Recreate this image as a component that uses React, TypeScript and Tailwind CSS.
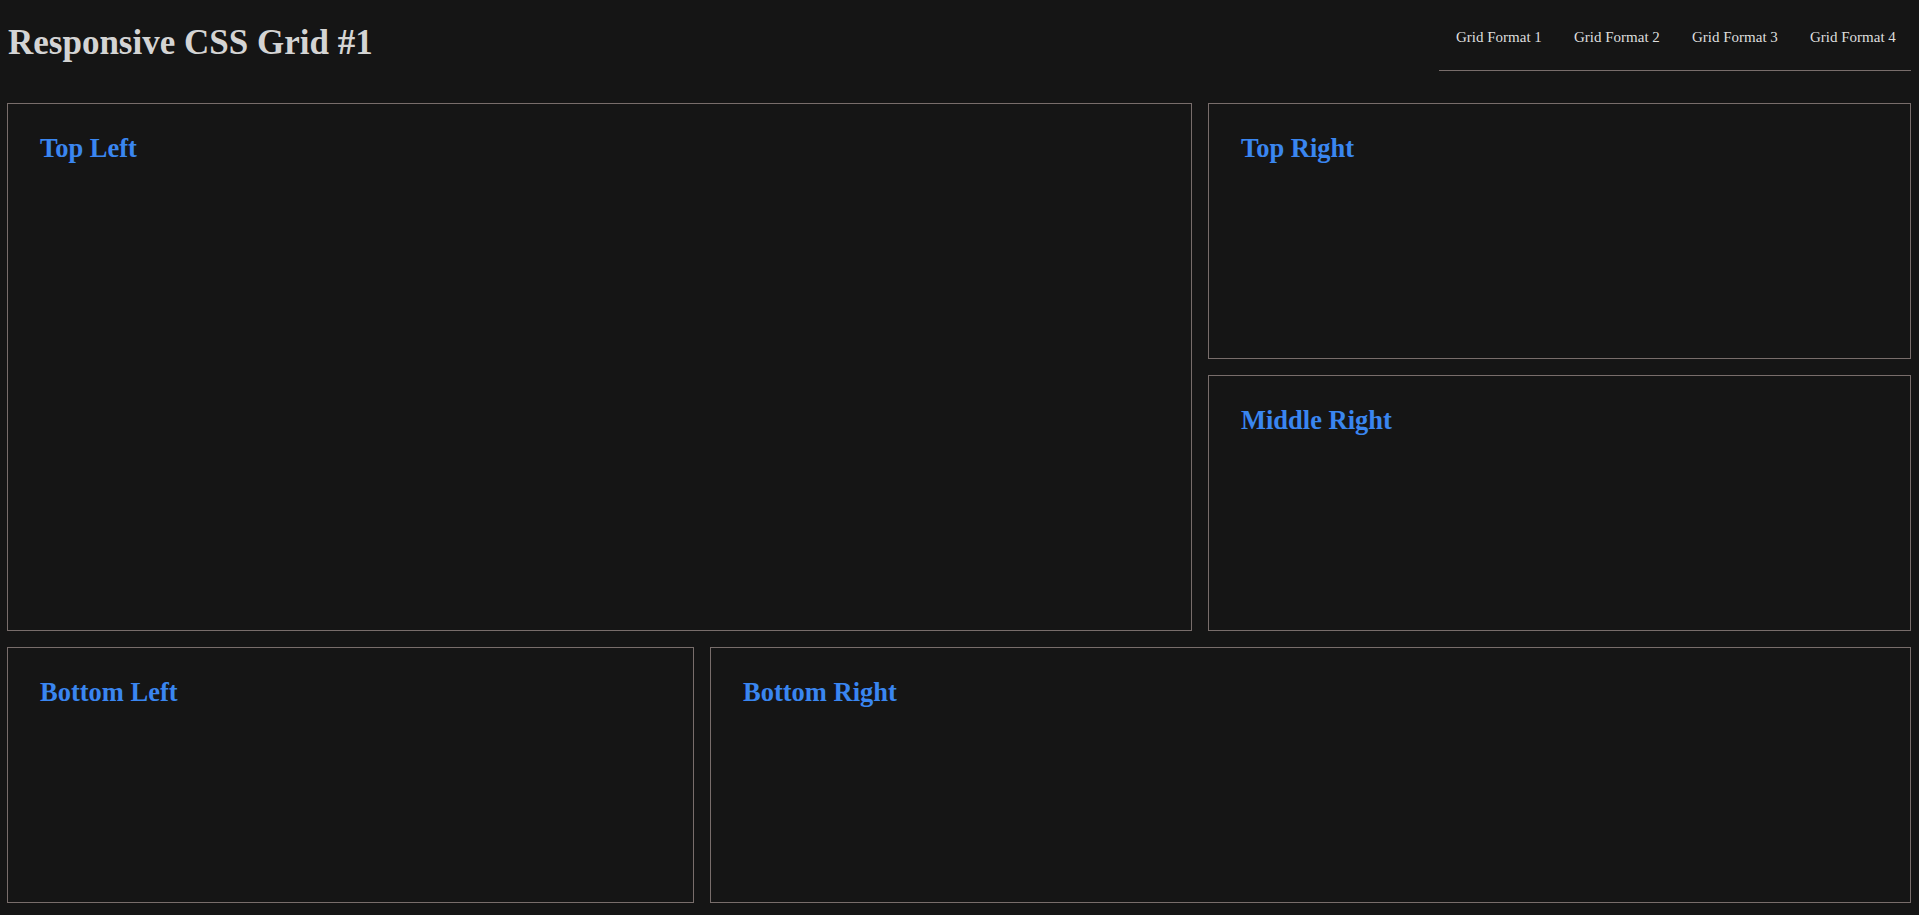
import React from "react";

function Panel({ title, className }: { title: string; className: string }) {
  return (
    <section className={"border border-[#786d6b] pl-8 pt-[29px] " + className}>
      <h2 className="font-['Liberation_Serif',serif] font-bold text-[26.5px] leading-[30px] text-[#3a86f0]">
        {title}
      </h2>
    </section>
  );
}

export default function App() {
  const nav = ["Grid Format 1", "Grid Format 2", "Grid Format 3", "Grid Format 4"];
  return (
    <div className="min-h-[915px] bg-[#151515] pl-[7px] pr-[8px] pb-[12px] font-['Liberation_Serif',serif]">
      <header className="flex items-start justify-between">
        <h1 className="mt-[23px] pl-px text-[35px] leading-[40px] font-bold text-[#d4d4d4]">
          Responsive CSS Grid #1
        </h1>
        <nav className="mt-[27px] pb-[23px] border-b border-[#786d6b]">
          <ul className="flex">
            {nav.map((n) => (
              <li key={n} className="w-[118px] pl-[17px] text-[15px] leading-[20px] text-[#dedede] whitespace-nowrap">
                {n}
              </li>
            ))}
          </ul>
        </nav>
      </header>
      <main className="mt-8 grid grid-cols-[687fr_482fr_703fr] grid-rows-[256px_256px_256px] gap-4">
        <Panel title="Top Left" className="col-span-2 row-span-2" />
        <Panel title="Top Right" className="col-start-3 row-start-1" />
        <Panel title="Middle Right" className="col-start-3 row-start-2" />
        <Panel title="Bottom Left" className="col-start-1 row-start-3" />
        <Panel title="Bottom Right" className="col-start-2 col-span-2 row-start-3" />
      </main>
    </div>
  );
}
